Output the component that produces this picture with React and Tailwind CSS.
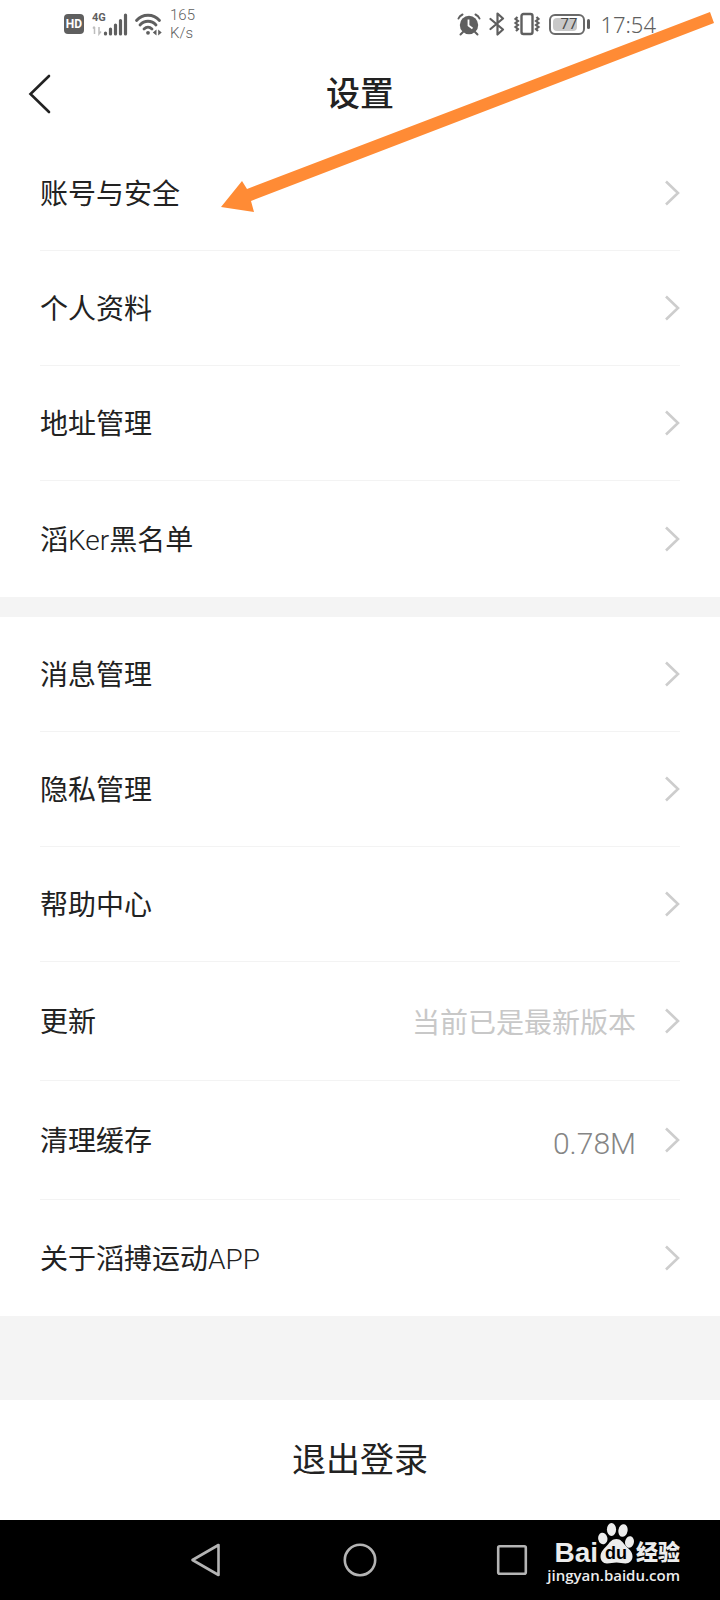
const accountItems = [
  { id: "security", label: "账号与安全" },
  { id: "profile", label: "个人资料" },
  { id: "address", label: "地址管理" },
  {
    id: "blacklist",
    label: (
      <>
        滔<span className="font-light">Ker</span>黑名单
      </>
    ),
    last: true,
  },
];

const appItems = [
  { id: "messages", label: "消息管理" },
  { id: "privacy", label: "隐私管理" },
  { id: "help", label: "帮助中心" },
  {
    id: "update",
    label: "更新",
    tall: true,
    value: <span className="pt-1.5 text-[28px] text-[#c8c8c8]">当前已是最新版本</span>,
  },
  {
    id: "cache",
    label: "清理缓存",
    tall: true,
    value: <span className="pt-1.5 text-[30px] font-light text-[#858585]">0.78M</span>,
  },
  {
    id: "about",
    label: (
      <>
        关于滔搏运动<span className="font-light">APP</span>
      </>
    ),
    last: true,
  },
];

function StatusBar() {
  return (
    <div className="flex h-12 items-center justify-between pl-16 pr-16 text-[#5f5f5f]">
      <div className="flex items-center">
        <span className="flex h-5 w-5 items-center justify-center rounded bg-[#5f5f5f] text-[12px] font-bold leading-none text-white">
          HD
        </span>
        <div className="relative ml-2 h-6 w-9">
          <span className="absolute left-0 top-0 text-[11px] font-bold leading-none">4G</span>
          <svg viewBox="0 0 36 24" className="h-6 w-9" aria-hidden="true">
            <path d="M2.5 22v-7M1 16.500l1.500-2M7 15v7l2-2.500" stroke="#bdbdbd" strokeWidth="1.500" fill="none" />
            <path
              d="M13.500 22v-1M18.500 22v-5M23.500 22v-9M28.500 22v-13.500M33.500 22V3"
              stroke="currentColor"
              strokeWidth="3.200"
              strokeLinecap="round"
            />
          </svg>
        </div>
        <svg viewBox="0 0 28 24" className="ml-1.5 h-6 w-7" fill="none" stroke="currentColor" aria-hidden="true">
          <path
            d="M2.500 8.500C8.500 1.500 19.500 1.500 25.500 8.500M6 13c4.500-5 11.500-5 16 0M10 17c2.500-2.500 5.500-2.500 8 0"
            strokeWidth="2.800"
            strokeLinecap="round"
          />
          <circle cx="14" cy="20.800" r="1.900" fill="currentColor" stroke="none" />
          <path d="M22.500 17.500v6L18.800 20.500zM24.200 17.500v6l3.500-3z" fill="currentColor" stroke="none" />
        </svg>
        <span className="ml-2 text-[15px] font-light leading-[18px]">
          165
          <br />
          K/s
        </span>
      </div>
      <div className="flex items-center">
        <svg viewBox="0 0 24 24" className="h-6 w-6" fill="none" stroke="currentColor" aria-hidden="true">
          <circle cx="12" cy="13" r="9.200" fill="currentColor" stroke="none" />
          <path d="M1.500 6.500Q2.500 4 5.500 2.500M22.500 6.500Q21.500 4 18.500 2.500" strokeWidth="2" strokeLinecap="round" />
          <path d="M6 20l-2.500 2.500M18 20l2.500 2.500" strokeWidth="2" strokeLinecap="round" />
          <path d="M11.500 7.500v6l4 3" stroke="#fff" strokeWidth="1.800" />
        </svg>
        <svg
          viewBox="0 0 16 24"
          className="ml-2 h-6 w-4"
          fill="none"
          stroke="currentColor"
          strokeWidth="2.200"
          strokeLinejoin="round"
          strokeLinecap="round"
          aria-hidden="true"
        >
          <path d="M1.500 7l12.500 10.500L8.500 22.500V1.500L14 6.500 1.500 17" />
        </svg>
        <svg viewBox="0 0 28 24" className="ml-2 h-6 w-7" fill="none" stroke="currentColor" aria-hidden="true">
          <rect x="8.500" y="2" width="11" height="20" rx="2" strokeWidth="2.400" />
          <path
            d="M4.500 5l-2 2 2.500 2-2.500 2 2.500 2-2.500 2 2.500 2-2 2M23.500 5l2 2-2.500 2 2.500 2-2.500 2 2.500 2-2.500 2 2 2"
            strokeWidth="2.200"
          />
        </svg>
        <div className="ml-2 flex items-center">
          <span className="flex h-[21px] w-9 items-center rounded-md border-2 border-[#6a6a6a] p-0.5">
            <span className="flex h-full w-6 items-center justify-end rounded-sm bg-[#c8c8c8] text-[15px] leading-none">
              <span className="text-[#4a4a4a]">77</span>
            </span>
          </span>
          <span className="ml-0.5 h-2.5 w-[3px] rounded bg-[#5f5f5f]" />
        </div>
        <span className="ml-2.5 font-['Noto_Sans'] text-[22px] font-light leading-none">17:54</span>
      </div>
    </div>
  );
}

function Header() {
  return (
    <header className="grid h-[88px] grid-cols-[80px_1fr_80px] items-center pt-1">
      <button type="button" aria-label="返回" className="flex h-full items-center pl-7">
        <svg viewBox="0 0 24 40" className="h-10 w-6" fill="none" stroke="#222" strokeWidth="2.600" aria-hidden="true">
          <path d="M21 2L2.500 20l18.500 18" strokeLinecap="round" />
        </svg>
      </button>
      <h1 className="text-center text-[34px] font-medium leading-none text-[#222]">设置</h1>
    </header>
  );
}

function SettingsRow({ item }) {
  return (
    <li className={item.last ? "h-[116px]" : item.tall ? "h-[119px] border-b border-[#f3f3f3]" : "h-[115px] border-b border-[#f3f3f3]"}>
      <button type="button" className="flex h-full w-full items-center text-left">
        <span className="flex-1 pt-1 text-[28px] leading-none text-[#222]">{item.label}</span>
        {item.value}
        <svg
          viewBox="0 0 16 26"
          className="ml-7 h-[26px] w-4"
          fill="none"
          stroke="#cdcdcd"
          strokeWidth="2.600"
          aria-hidden="true"
        >
          <path d="M2 1.500L14 13 2 24.500" />
        </svg>
      </button>
    </li>
  );
}

function SettingsList({ items }) {
  return (
    <ul className="bg-white px-10">
      {items.map((item) => (
        <SettingsRow key={item.id} item={item} />
      ))}
    </ul>
  );
}

function Watermark() {
  return (
    <div className="absolute right-10 top-0.5 flex flex-col items-end text-[#ececec]">
      <div className="flex h-11 items-end">
        <span className="font-['Liberation_Sans'] text-[28px] font-bold leading-[26px]">Bai</span>
        <div className="relative h-11 w-9">
          <svg viewBox="0 0 36 44" className="h-11 w-9" fill="currentColor" aria-hidden="true">
            <ellipse cx="4.800" cy="16.500" rx="4.600" ry="5.800" transform="rotate(-12 4.800 16.500)" />
            <ellipse cx="13.500" cy="7.500" rx="4.600" ry="6.400" />
            <ellipse cx="25" cy="8.500" rx="4.600" ry="6.400" transform="rotate(10 25 8.500)" />
            <ellipse cx="31.500" cy="20" rx="4.400" ry="5.800" transform="rotate(12 31.500 20)" />
            <path d="M18.500 17c4 0 6 3 8.500 6 3.500 4 7.500 6 7.500 11.500 0 4-3 7-7 7-3.500 0-5.500-1-9-1s-6 1-9.500 1c-4 0-6.500-3-6.500-7 0-5 4-8 7-11.500 2.500-3 4.500-6 9-6z" />
          </svg>
          <span className="absolute inset-x-0 bottom-1 text-center font-['Liberation_Sans'] text-[18px] font-bold leading-none text-black">
            du
          </span>
        </div>
        <span className="ml-0.5 text-[22px] font-black leading-[26px]">经验</span>
      </div>
      <span className="font-['Open_Sans'] text-[15px] font-semibold leading-[18px]">jingyan.baidu.com</span>
    </div>
  );
}

function NavBar() {
  return (
    <nav className="relative flex h-20 items-center justify-center gap-[119px] bg-black">
      <button type="button" aria-label="返回上一页">
        <svg viewBox="0 0 34 34" className="size-[34px]" fill="none" stroke="#b4b4b4" strokeWidth="2.600" aria-hidden="true">
          <path d="M28.500 2v30L2.500 17z" strokeLinejoin="round" />
        </svg>
      </button>
      <button type="button" aria-label="主屏幕">
        <svg viewBox="0 0 34 34" className="size-[34px]" fill="none" stroke="#b4b4b4" strokeWidth="2.600" aria-hidden="true">
          <circle cx="17" cy="17" r="15.200" />
        </svg>
      </button>
      <button type="button" aria-label="最近任务">
        <svg viewBox="0 0 34 34" className="size-[34px]" fill="none" stroke="#b4b4b4" strokeWidth="2.600" aria-hidden="true">
          <rect x="2.200" y="3.200" width="27.600" height="27.600" rx="1.500" />
        </svg>
      </button>
      <Watermark />
    </nav>
  );
}

export default function App() {
  return (
    <div className="relative flex min-h-screen flex-col bg-white font-[Roboto,'Noto_Sans_CJK_SC',sans-serif]">
      <StatusBar />
      <Header />
      <main className="flex flex-1 flex-col bg-[#f4f4f4]">
        <SettingsList items={accountItems} />
        <div className="h-5" />
        <SettingsList items={appItems} />
        <div className="h-[84px]" />
        <button type="button" className="h-[120px] w-full bg-white text-[34px] leading-none text-[#222]">
          退出登录
        </button>
      </main>
      <NavBar />

      {/* pointer to the account row */}
      <svg
        viewBox="0 0 500 210"
        className="pointer-events-none absolute right-0 top-2 h-[210px] w-[500px]"
        fill="#ff8b35"
        aria-hidden="true"
      >
        <path d="M1 199L22 173l5 8L490 4l4 11L31 193l3 11z" />
      </svg>
    </div>
  );
}
